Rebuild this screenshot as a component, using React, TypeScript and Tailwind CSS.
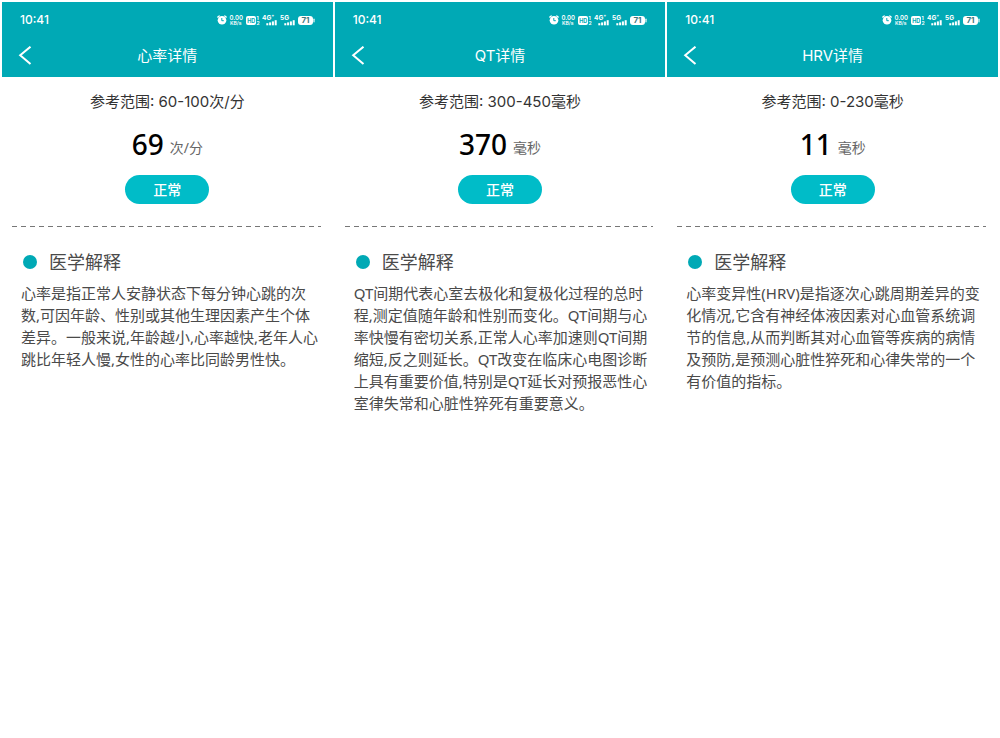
import React from "react";

type Detail = {
  title: string;
  range: string;
  value: string;
  unit: string;
  lines: string[];
};

const details: Detail[] = [
  {
    title: "心率详情",
    range: "参考范围: 60-100次/分",
    value: "69",
    unit: "次/分",
    lines: [
      "心率是指正常人安静状态下每分钟心跳的次",
      "数,可因年龄、性别或其他生理因素产生个体",
      "差异。一般来说,年龄越小,心率越快,老年人心",
      "跳比年轻人慢,女性的心率比同龄男性快。",
    ],
  },
  {
    title: "QT详情",
    range: "参考范围: 300-450毫秒",
    value: "370",
    unit: "毫秒",
    lines: [
      "QT间期代表心室去极化和复极化过程的总时",
      "程,测定值随年龄和性别而变化。QT间期与心",
      "率快慢有密切关系,正常人心率加速则QT间期",
      "缩短,反之则延长。QT改变在临床心电图诊断",
      "上具有重要价值,特别是QT延长对预报恶性心",
      "室律失常和心脏性猝死有重要意义。",
    ],
  },
  {
    title: "HRV详情",
    range: "参考范围: 0-230毫秒",
    value: "11",
    unit: "毫秒",
    lines: [
      "心率变异性(HRV)是指逐次心跳周期差异的变",
      "化情况,它含有神经体液因素对心血管系统调",
      "节的信息,从而判断其对心血管等疾病的病情",
      "及预防,是预测心脏性猝死和心律失常的一个",
      "有价值的指标。",
    ],
  },
];

function Signal({ label }: { label: string }) {
  return (
    <svg viewBox="0 -4 16 19" className="h-[19px] w-4" fill="currentColor" aria-hidden="true">
      <text x="0" y="4.8" fontSize="6.5" fontWeight="700">{label}</text>
      <rect x="4.3" y="8.2" width="2" height="2.1" />
      <rect x="7.1" y="7.4" width="2" height="2.9" />
      <rect x="9.9" y="6.4" width="2" height="3.9" />
      <rect x="12.7" y="5.2" width="2" height="5.1" />
    </svg>
  );
}

function StatusBar() {
  return (
    <div className="flex h-9 items-center justify-between px-[18px] font-['Inter',sans-serif]">
      <span className="text-[12px] font-medium leading-4">10:41</span>
      <div className="flex items-center gap-[2px]">
        <svg viewBox="0 0 10 10" className="size-[10px]" aria-hidden="true">
          <path d="M.8 2 2.2.9M9.2 2 7.8.9" stroke="currentColor" strokeWidth="1.3" strokeLinecap="round" />
          <circle cx="5" cy="5.3" r="4.3" fill="currentColor" />
          <path d="M4.8 3v2.7h2" fill="none" stroke="#00a9b5" strokeWidth="1" />
        </svg>
        <svg viewBox="0 -4 15 19" className="h-[19px] w-[15px]" fill="currentColor" aria-hidden="true">
          <text x="0.5" y="5" fontSize="6" fontWeight="600">0.00</text>
          <text x="1" y="10.4" fontSize="5" fontWeight="600">KB/s</text>
        </svg>
        <svg viewBox="0 -4 14 19" className="h-[19px] w-[14px]" fill="currentColor" aria-hidden="true">
          <rect x="0" y="1" width="10" height="9" rx="2" />
          <text x="1.2" y="7.5" fontSize="5.5" fontWeight="700" fill="#00a9b5">HD</text>
          <text x="10.6" y="4.8" fontSize="5" fontWeight="700">1</text>
          <text x="10.6" y="10.2" fontSize="5" fontWeight="700">2</text>
        </svg>
        <Signal label="4G⁺" />
        <Signal label="5G" />
        <svg viewBox="0 -4 17 17" className="size-[17px]" aria-hidden="true">
          <rect x="0" y="0" width="15" height="9" rx="3" fill="currentColor" />
          <rect x="15.3" y="2.5" width="1.4" height="4" rx=".7" fill="currentColor" opacity=".8" />
          <text x="7.5" y="7.4" fontSize="8" fontWeight="700" textAnchor="middle" fill="#40777c">71</text>
        </svg>
      </div>
    </div>
  );
}

function DetailScreen({ detail }: { detail: Detail }) {
  return (
    <section className="min-w-0 flex-1">
      <header className="bg-[#00a9b5] text-white">
        <StatusBar />
        <div className="grid h-[39px] grid-cols-[40px_1fr_40px] items-center pb-[3px]">
          <button type="button" aria-label="返回" className="flex h-6 items-center pl-4">
            <svg viewBox="0 0 14 20" className="h-5 w-[14px]" fill="none" stroke="currentColor" strokeWidth="2" aria-hidden="true">
              <path d="M12.5.7 2.2 9.3l10.3 8.8" />
            </svg>
          </button>
          <h1 className="text-center font-['Inter','Noto_Sans_CJK_SC',sans-serif] text-[15px] leading-6">{detail.title}</h1>
        </div>
      </header>

      <div className="flex flex-col items-center pt-[13px]">
        <p className="font-['Inter','Noto_Sans_CJK_SC',sans-serif] text-[15px] leading-6 text-[#333]">{detail.range}</p>
        <p className="mt-[10px] flex items-end gap-[6px]">
          <span className="text-[28px] font-medium leading-10 text-black">{detail.value}</span>
          <span className="text-[14px] leading-8 text-[#666]">{detail.unit}</span>
        </p>
        <span className="mt-[11px] rounded-full bg-[#00bcc8] px-7 text-[14px] font-medium leading-[29px] text-white">
          正常
        </span>
      </div>

      <div className="ml-[10px] mr-3 mt-[22px] h-px bg-[repeating-linear-gradient(90deg,#777_0_5px,transparent_5px_9px)]" />

      <div className="pl-[19px] pt-[21px]">
        <h2 className="flex items-center gap-3 pl-[2px] text-[18px] leading-7 text-[#4a4a4a]">
          <span className="size-[14px] rounded-full bg-[#00a9b5]" />
          医学解释
        </h2>
        <p className="mt-[6px] whitespace-nowrap text-[15px] leading-[22px] text-[#4a4a4a]">
          {detail.lines.map((line) => (
            <span key={line} className="block">{line}</span>
          ))}
        </p>
      </div>
    </section>
  );
}

export default function App() {
  return (
    <main lang="zh-CN" className="flex min-h-screen gap-[2px] bg-white p-[2px] font-['Noto_Sans','Noto_Sans_CJK_SC',sans-serif]">
      {details.map((detail) => (
        <DetailScreen key={detail.title} detail={detail} />
      ))}
    </main>
  );
}
